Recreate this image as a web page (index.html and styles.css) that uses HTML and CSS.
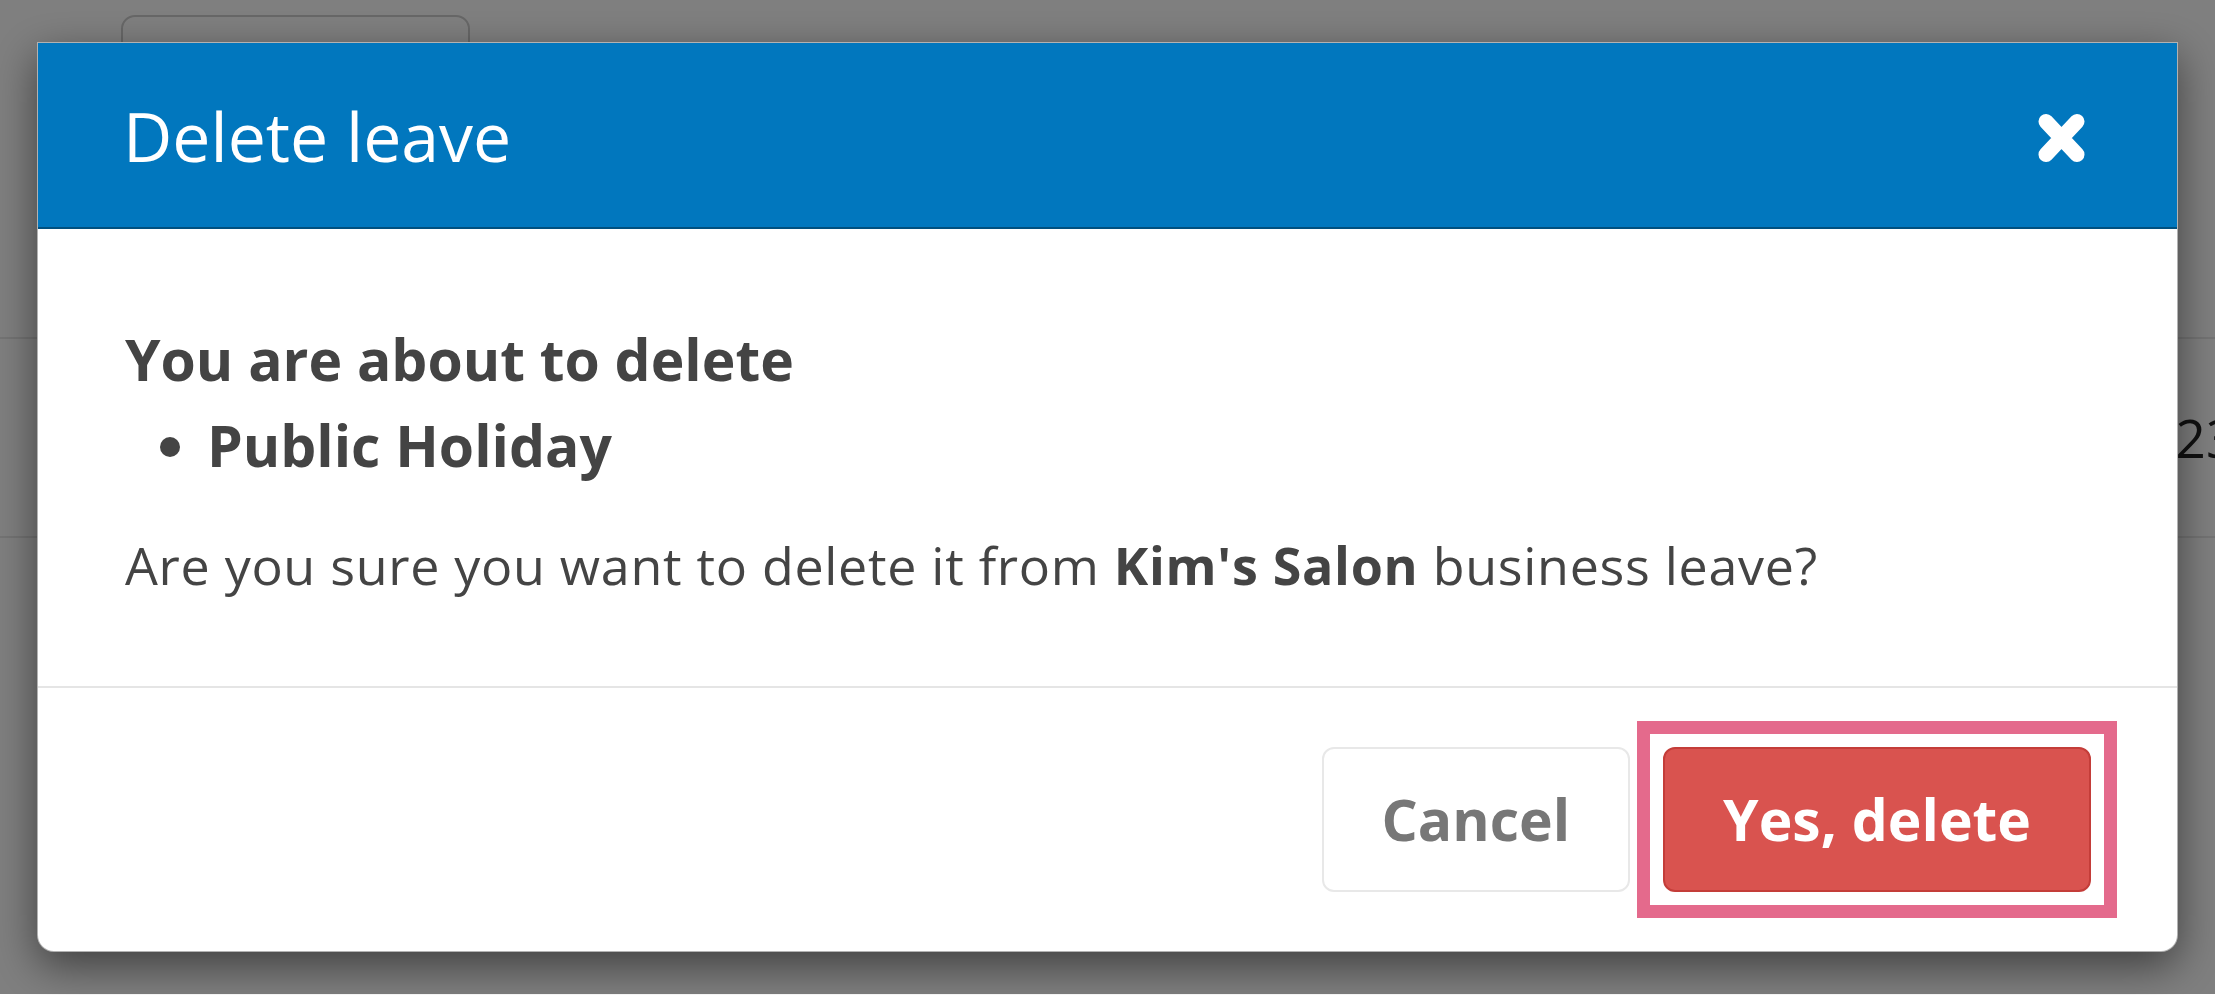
FILE: index.html
```html
<!DOCTYPE html>
<html lang="en">
<head>
<meta charset="UTF-8">
<meta name="viewport" content="width=device-width, initial-scale=1.0">
<title>Business leave</title>
<link rel="stylesheet" href="styles.css">
</head>
<body>
<div class="page">
    <div class="page-tabs">
        <div class="tab"></div>
    </div>
    <div class="leave-table">
        <div class="leave-row">
            <span class="leave-date">2023</span>
        </div>
    </div>
</div>

<div class="backdrop">
    <div class="modal">
        <div class="modal-header">
            <h2 class="modal-title">Delete leave</h2>
            <button class="close" aria-label="Close">
                <svg width="47" height="50" viewBox="0 0 47 50">
                    <path d="M8 8.5 L39 41.5 M39 8.5 L8 41.5" stroke="#fff" stroke-width="15" stroke-linecap="round" fill="none"/>
                </svg>
            </button>
        </div>
        <div class="modal-body">
            <p class="confirm-title">You are about to delete</p>
            <ul class="confirm-list">
                <li>Public Holiday</li>
            </ul>
            <p class="confirm-text">Are you sure you want to delete it from <strong>Kim's Salon</strong> business leave?</p>
        </div>
        <div class="modal-footer">
            <button class="btn btn-default">Cancel</button>
            <span class="highlight">
                <button class="btn btn-danger">Yes, delete</button>
            </span>
        </div>
    </div>
</div>
</body>
</html>
```

FILE: styles.css
```css
body {
    margin: 0;
    font-family: "Open Sans", "Liberation Sans", sans-serif;
    background: #fff;
    overflow: hidden;
}

/* page behind the dialog */
.page {
    height: 994px;
    border-bottom: 1px solid #fff;
    background: #fff;
}
.page-tabs {
    padding: 15px 0 0 121px;
}
.tab {
    width: 345px;
    height: 100px;
    border: 2px solid #cfcfcf;
    border-radius: 14px;
}
.leave-table {
    margin-top: 218px;
}
.leave-row {
    display: flex;
    align-items: center;
    height: 197px;
    padding-left: 2115px;
    border-top: 2px solid #e8e8e8;
    border-bottom: 2px solid #e8e8e8;
    font-size: 53px;
    color: #222;
    white-space: nowrap;
}

/* dialog */
.backdrop {
    position: fixed;
    top: 0;
    left: 0;
    right: 0;
    bottom: 1px;
    display: flex;
    align-items: center;
    justify-content: center;
    background: rgba(0, 0, 0, 0.5);
}
.modal {
    width: 2141px;
    box-sizing: border-box;
    background: #fff;
    border: 1px solid rgba(0, 0, 0, 0.3);
    border-radius: 0 0 17px 17px;
    box-shadow: 0 14px 43px rgba(0, 0, 0, 0.5);
}
.modal-header {
    display: flex;
    align-items: center;
    justify-content: space-between;
    height: 184px;
    padding: 0 92px 0 85px;
    background: #0177be;
    border-bottom: 2px solid #00507f;
}
.modal-title {
    margin: 0;
    font-size: 68px;
    font-weight: 400;
    color: #fff;
}
.close {
    padding: 0;
    margin-top: 6px;
    border: none;
    background: none;
    cursor: pointer;
    line-height: 0;
}
.modal-body {
    padding: 88px 87px 82px;
    color: #444;
}
.confirm-title {
    margin: 0;
    font-size: 57px;
    font-weight: 700;
    line-height: 1.5;
}
.confirm-list {
    margin: 0 0 39px;
    padding-left: 82px;
    font-size: 57px;
    font-weight: 700;
    line-height: 1.5;
}
.confirm-text {
    margin: 0;
    font-size: 52px;
    letter-spacing: 0.7px;
    line-height: 1.47;
}
.modal-footer {
    display: flex;
    justify-content: flex-end;
    align-items: center;
    gap: 33px;
    padding: 59px 86px 59px;
    border-top: 2px solid #e5e5e5;
}
.btn {
    height: 145px;
    padding: 0 58px;
    border: 2px solid transparent;
    border-radius: 12px;
    font-family: "Open Sans", "Liberation Sans", sans-serif;
    font-size: 57px;
    font-weight: 700;
    cursor: pointer;
}
.btn-default {
    background: #fff;
    border-color: #e8e8e8;
    color: #777;
}
.btn-danger {
    display: block;
    background: #d9534f;
    border-color: #c43d39;
    color: #fff;
}
/* square marker drawn round the confirm button */
.highlight {
    display: block;
    margin: -26px;
    padding: 13px;
    border: 13px solid #e46a8c;
    background: #fff;
}
```
